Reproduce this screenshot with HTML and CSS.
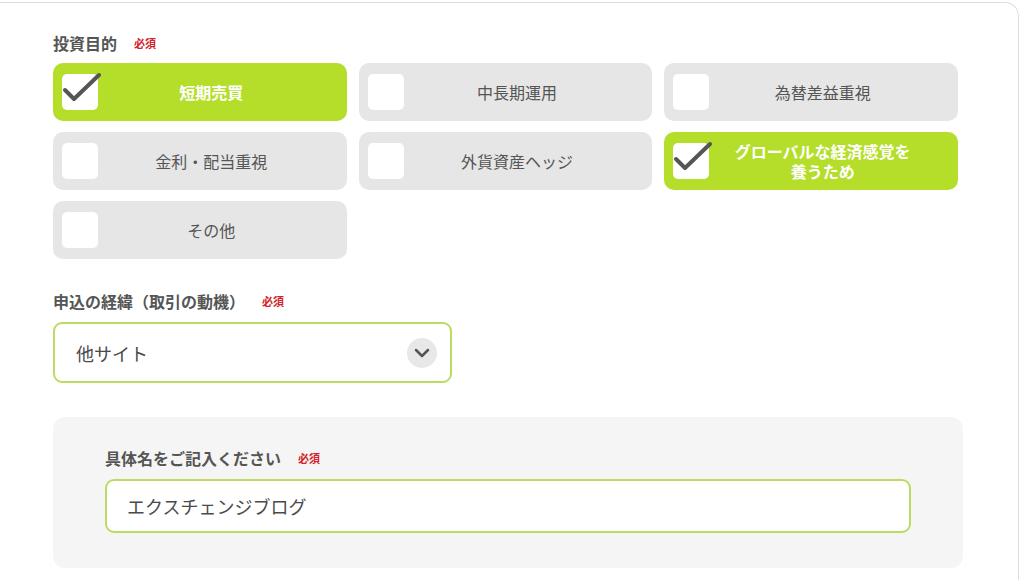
FILE: index.html
```html
<!DOCTYPE html>
<html lang="ja">
<head>
<meta charset="utf-8">
<link rel="stylesheet" href="styles.css">
</head>
<body>
<div class="card">
  <div class="field-label">投資目的<span class="req">必須</span></div>
  <div class="options">
    <div class="opt on"><span class="box"><svg class="tick" viewBox="0 0 44 40"><polyline points="4,23 13,32 38,8"/></svg></span><span class="opt-text">短期売買</span></div>
    <div class="opt"><span class="box"></span><span class="opt-text">中長期運用</span></div>
    <div class="opt"><span class="box"></span><span class="opt-text">為替差益重視</span></div>
    <div class="opt"><span class="box"></span><span class="opt-text">金利・配当重視</span></div>
    <div class="opt"><span class="box"></span><span class="opt-text">外貨資産ヘッジ</span></div>
    <div class="opt on"><span class="box"><svg class="tick" viewBox="0 0 44 40"><polyline points="4,23 13,32 38,8"/></svg></span><span class="opt-text">グローバルな経済感覚を<br>養うため</span></div>
    <div class="opt"><span class="box"></span><span class="opt-text">その他</span></div>
  </div>

  <div class="field-label second">申込の経緯（取引の動機）<span class="req">必須</span></div>
  <div class="select">
    <span class="select-value">他サイト</span>
    <span class="chev"><svg viewBox="0 0 30 30"><polyline points="9,12 15,18 21,12"/></svg></span>
  </div>

  <div class="panel">
    <div class="field-label">具体名をご記入ください<span class="req">必須</span></div>
    <div class="input">エクスチェンジブログ</div>
  </div>
</div>
</body>
</html>
```

FILE: styles.css
```css
html, body {
  margin: 0;
  padding: 0;
  background: #fff;
}
body {
  font-family: "Noto Sans CJK JP", "Noto Sans", sans-serif;
  color: #555;
  width: 1024px;
  height: 580px;
  overflow: hidden;
}
.card {
  margin-top: 2px;
  width: 1019px;
  box-sizing: border-box;
  height: 600px;
  border-top: 1px solid #dedede;
  border-right: 1px solid #dedede;
  border-top-right-radius: 14px;
  padding: 30px 0 0 53px;
}
.field-label {
  font-size: 16px;
  font-weight: bold;
  line-height: 20px;
  color: #555;
  display: flex;
  align-items: center;
}
.req {
  font-size: 11px;
  color: #d2232a;
  font-weight: bold;
  margin-left: 17px;
  line-height: 20px;
}
.options {
  margin-top: 10px;
  width: 905px;
  display: grid;
  grid-template-columns: repeat(3, 1fr);
  grid-auto-rows: 58px;
  column-gap: 12px;
  row-gap: 11px;
}
.opt {
  background: #e6e6e6;
  border-radius: 10px;
  display: flex;
  align-items: center;
  padding-left: 9px;
  padding-right: 22px;
}
.opt.on {
  background: #b4de2a;
}
.box {
  position: relative;
  width: 36px;
  height: 36px;
  background: #fff;
  border-radius: 5px;
  flex: none;
}
.tick {
  position: absolute;
  left: -1px;
  top: -7px;
  width: 44px;
  height: 40px;
  overflow: visible;
}
.tick polyline {
  fill: none;
  stroke: #555;
  stroke-width: 4;
  stroke-linecap: round;
  stroke-linejoin: round;
}
.opt-text {
  flex: 1;
  text-align: center;
  font-size: 16px;
  line-height: 20px;
  color: #555;
}
.opt.on .opt-text {
  color: #fff;
  font-weight: bold;
}
.field-label.second {
  margin-top: 32px;
}
.select {
  margin-top: 11px;
  width: 399px;
  height: 61px;
  box-sizing: border-box;
  border: 2px solid #bcdb62;
  border-radius: 9px;
  display: flex;
  align-items: center;
  justify-content: space-between;
  padding: 0 13px 0 21px;
  background: #fff;
}
.select-value {
  font-size: 18px;
  color: #4a4a4a;
}
.chev {
  width: 30px;
  height: 30px;
  border-radius: 50%;
  background: #e8e8e8;
  display: flex;
}
.chev svg {
  width: 30px;
  height: 30px;
}
.chev polyline {
  fill: none;
  stroke: #555;
  stroke-width: 2.5;
  stroke-linecap: round;
  stroke-linejoin: round;
}
.panel {
  margin-top: 34px;
  width: 910px;
  box-sizing: border-box;
  background: #f5f5f5;
  border-radius: 12px;
  padding: 31px 52px 35px;
}
.input {
  margin-top: 11px;
  height: 54px;
  box-sizing: border-box;
  border: 2px solid #bcdb62;
  border-radius: 9px;
  background: #fff;
  display: flex;
  align-items: center;
  padding-left: 20px;
  font-size: 18px;
  color: #4a4a4a;
}
```
